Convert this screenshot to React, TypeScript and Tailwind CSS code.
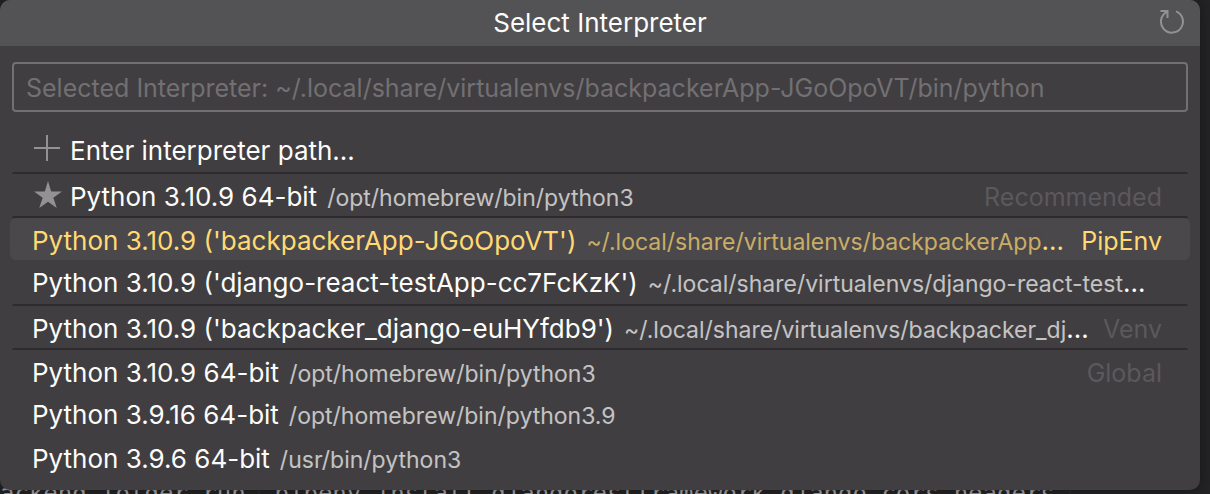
import { useState } from "react";

type Item = {
  label: string;
  path?: string;
  group?: string;
  icon?: "add" | "star";
  separated?: boolean;
};

const items: Item[] = [
  { label: "Enter interpreter path...", icon: "add" },
  {
    label: "Python 3.10.9 64-bit",
    path: "/opt/homebrew/bin/python3",
    group: "Recommended",
    icon: "star",
    separated: true,
  },
  {
    label: "Python 3.10.9 ('backpackerApp-JGoOpoVT')",
    path: "~/.local/share/virtualenvs/backpackerApp-JGoOpoVT/bin/python",
    group: "PipEnv",
    separated: true,
  },
  {
    label: "Python 3.10.9 ('django-react-testApp-cc7FcKzK')",
    path: "~/.local/share/virtualenvs/django-react-testApp-cc7FcKzK/bin/python",
  },
  {
    label: "Python 3.10.9 ('backpacker_django-euHYfdb9')",
    path: "~/.local/share/virtualenvs/backpacker_django-euHYfdb9/bin/python",
    group: "Venv",
    separated: true,
  },
  {
    label: "Python 3.10.9 64-bit",
    path: "/opt/homebrew/bin/python3",
    group: "Global",
    separated: true,
  },
  { label: "Python 3.9.16 64-bit", path: "/opt/homebrew/bin/python3.9" },
  { label: "Python 3.9.6 64-bit", path: "/usr/bin/python3" },
];

function RefreshIcon() {
  return (
    <svg viewBox="0 0 26 26" className="h-[26px] w-[26px]" fill="none" stroke="currentColor" strokeWidth="2" aria-hidden="true">
      <path d="M17 3.4A11 11 0 1 1 8 3.8" />
      <path d="M1.5 3H8.5V10" />
    </svg>
  );
}

function AddIcon() {
  return (
    <svg viewBox="0 0 28 28" className="h-7 w-7" fill="none" stroke="currentColor" strokeWidth="2" aria-hidden="true">
      <path d="M13 0V26M0 13H26" />
    </svg>
  );
}

function StarIcon() {
  return (
    <svg viewBox="0 0 28 28" className="h-7 w-7" fill="currentColor" aria-hidden="true">
      <path d="M14 0L17.2 10.4H28L19.3 16.8L22.8 27L14 20.7L5.2 27L8.7 16.8L0 10.4H10.8Z" />
    </svg>
  );
}

function Row({ item, selected, onSelect }: { item: Item; selected: boolean; onSelect: () => void }) {
  return (
    <li className="flex h-11 flex-col">
      {item.separated && <div className="mx-0.5 h-0.5 shrink-0 rounded-t-sm bg-[#2d2b2e]" />}
      <button
        type="button"
        onClick={onSelect}
        aria-current={selected}
        className={`flex w-full min-w-0 flex-1 items-center rounded-md pr-7 pl-[22px] text-left ${
          item.separated ? "pt-1" : "pt-0.5"
        } ${selected ? "bg-[#4a484b] text-[#ffd974]" : "text-[#fcfcfa]"}`}
      >
        {item.icon && (
          <span className="mr-2 -mt-1 flex shrink-0 pl-0.5 text-[#939293]">
            {item.icon === "add" ? <AddIcon /> : <StarIcon />}
          </span>
        )}
        <span className="mr-3 min-w-0 flex-1 truncate text-[26px]">
          <span>{item.label}</span>
          {item.path && <span className="ml-2.5 text-[23px] opacity-70">{item.path}</span>}
        </span>
        {item.group && (
          <span className={`shrink-0 ${selected ? "" : "text-[#5b595c]"}`}>{item.group}</span>
        )}
      </button>
    </li>
  );
}

export default function App() {
  const [selected, setSelected] = useState(2);
  const [query, setQuery] = useState("");

  return (
    <div className="relative h-screen overflow-hidden bg-[#242325] pr-2.5 font-['Inter',sans-serif] text-[25px] leading-8">
      <p className="absolute -bottom-3.5 left-0 font-['DejaVu_Sans_Mono',monospace] text-2xl leading-7 whitespace-pre text-[#b5b3b6]">
        {"ackend folder run "}
        <code className="rounded-sm font-['DejaVu_Sans_Mono',monospace] shadow-[0_0_0_2px_#2b2a2c]">
          {" pipenv install djangorestframework django-cors-headers "}
        </code>
      </p>
      <section
        aria-label="Select Interpreter"
        className="relative overflow-hidden rounded-[10px] bg-[#403e41] pb-2.5 shadow-[0_0_12px_2px_rgba(15,15,16,0.5)]"
      >
        <header className="grid h-[46px] grid-cols-[1fr_auto_1fr] items-center bg-[#535355] px-[15px]">
          <h1 className="col-start-2 text-[26px] text-[#fcfcfa]">Select Interpreter</h1>
          <button type="button" aria-label="Refresh" className="-mt-1 justify-self-end text-[#939293]">
            <RefreshIcon />
          </button>
        </header>
        <div className="px-3 py-4">
          <input
            type="text"
            aria-label="Selected Interpreter"
            value={query}
            onChange={(e) => setQuery(e.target.value)}
            placeholder="Selected Interpreter: ~/.local/share/virtualenvs/backpackerApp-JGoOpoVT/bin/python"
            className="block h-[50px] w-full rounded-sm border-2 border-[#727072] bg-[#403e41] px-3 pt-0.5 text-[#fcfcfa] outline-none placeholder:text-[#727072]"
          />
        </div>
        <ul className="px-2.5">
          {items.map((item, i) => (
            <Row key={i} item={item} selected={i === selected} onSelect={() => setSelected(i)} />
          ))}
        </ul>
      </section>
    </div>
  );
}
